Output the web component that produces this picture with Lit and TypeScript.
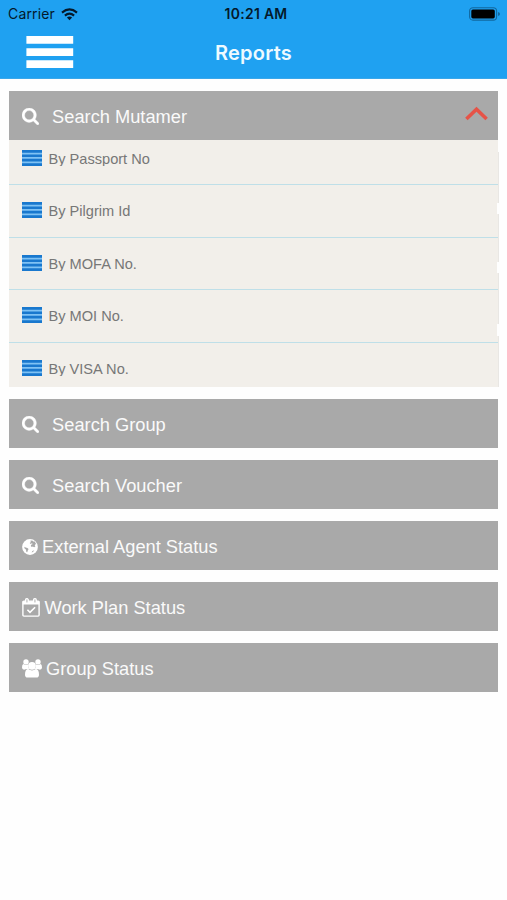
import { LitElement, html, css, svg } from "lit";
import { customElement } from "lit/decorators.js";

const icons: Record<string, unknown> = {
  search: html`<svg class="search" viewBox="64 128 1664 1664" width="17" height="17"><path fill="#fff" stroke="#fff" stroke-width="30" d="M1216 832q0-185-131.5-316.5t-316.5-131.5-316.5 131.5-131.5 316.5 131.5 316.5 316.5 131.5 316.5-131.5 131.5-316.5zm512 832q0 52-38 90t-90 38q-54 0-90-38l-343-342q-179 124-399 124-143 0-273.5-55.5t-225-150-150-225-55.5-273.5 55.5-273.5 150-225 225-150 273.5-55.5 273.5 55.5 225 150 150 225 55.5 273.5q0 220-124 399l343 343q37 37 37 90z"/></svg>`,
  globe: html`<svg class="globe" viewBox="0 0 16 16" width="16" height="16"><circle cx="8" cy="8" r="7.9" fill="#fff"/><path fill="#a9a9a9" d="M8.2 1.7L10.3 1.5L11.2 2.4L12.7 2.6L14 4.8L12.7 6.2L13.4 7.4L12.1 8.3L10.8 7.5L9.8 8L8.8 7L9.2 5.8L10.8 4.9L9.8 4.3L8.6 5L7.7 4.1L9 3.1ZM2.3 7.7L3.7 8.6L5.4 9.1L6.6 10.1L5.9 11.3L5.2 13.2L4.4 12.9L3.9 10.6L2.6 9.5ZM10.4 12L11.8 11.4L12.3 11.8L10.4 13.3L9.6 13.5Z"/></svg>`,
  calendar: html`<svg class="calendar" viewBox="0 0 18 19" width="18" height="19"><rect x=".9" y="3.1" width="16.2" height="15" rx="1" fill="none" stroke="#fff" stroke-width="1.4"/><path fill="#fff" d="M.7 3.2h16.6v3.3H.7z"/><rect x="3.5" y=".7" width="2.8" height="4.4" rx="1.2" fill="#ccc" stroke="#fff" stroke-width="1.2"/><rect x="11.5" y=".7" width="2.8" height="4.4" rx="1.2" fill="#ccc" stroke="#fff" stroke-width="1.2"/><path fill="none" stroke="#fff" stroke-width="1.6" d="M5.4 11.7l2.6 2.7 5.1-5.1"/></svg>`,
  users: html`<svg class="users" viewBox="0 0 20 19" width="20" height="19"><g fill="#fff"><circle cx="4" cy="2.9" r="2.7"/><circle cx="16" cy="2.9" r="2.7"/><path d="M1.2 5.1Q4 6.8 6 5.6Q5.6 8.5 7.2 10H4.6Q3.5 10.1 2.8 10.6Q0 11 0 8.6Q0 5.6 1.2 5.1ZM18.8 5.1Q16 6.8 14 5.6Q14.4 8.5 12.8 10H15.4Q16.5 10.1 17.2 10.6Q20 11 20 8.6Q20 5.6 18.8 5.1Z"/><circle cx="10" cy="6.8" r="3.9"/><path d="M6.3 10Q10 12.8 13.7 10Q17 10 17 15.8Q17 18.6 14.4 18.6H5.6Q3 18.6 3 15.8Q3 10 6.3 10Z"/></g></svg>`,
};

const bars = [
  { icon: "search", label: "Search Group" },
  { icon: "search", label: "Search Voucher" },
  { icon: "globe", label: "External Agent Status" },
  { icon: "calendar", label: "Work Plan Status" },
  { icon: "users", label: "Group Status" },
];
const items = ["By Passport No", "By Pilgrim Id", "By MOFA No.", "By MOI No.", "By VISA No."];

@customElement("app-root")
export class AppRoot extends LitElement {
  static styles = css`
    :host { display: block; height: 900px; background: #fefefe; overflow: hidden; font-family: "Liberation Sans", Arial, sans-serif; }
    * { box-sizing: border-box; }
    svg { display: block; flex: none; }
    header { height: 79px; background: #1fa1f1; border-bottom: 1px solid #3aa7ea; }
    .status { height: 28px; display: grid; grid-template-columns: 1fr auto 1fr; align-items: center; font: 14px/28px Inter, sans-serif; color: #04192b; padding: 0 6px 0 8px; }
    .carrier { display: flex; align-items: center; gap: 6px; letter-spacing: .16px; }
    .clock { font-weight: 600; font-size: 13.9px; letter-spacing: .3px; padding-left: 3px; }
    .battery { justify-self: end; }
    .nav { height: 50px; display: grid; grid-template-columns: 1fr auto 1fr; align-items: center; }
    .menu { margin: -2px 0 0 26px; }
    .title { font: 600 20px/50px Inter, sans-serif; letter-spacing: .2px; color: #eefaff; }
    main { padding: 12px 9px 0; }
    .bar { height: 49px; margin-bottom: 12.1px; background: #a9a9a9; color: #fafafa; display: flex; align-items: center; padding: 2px 10px 0 12.5px; font-size: 18.25px; line-height: 24px; white-space: nowrap; }
    .bar.open { margin-bottom: 0; }
    .search { margin-right: 13px; margin-left: .6px; }
    .globe { margin-right: 4.6px; }
    .calendar { margin-right: 5px; }
    .users { margin-right: 4.5px; }
    .chevron { margin: -6px 0 0 auto; }
    .list { position: relative; height: 247px; margin: 0 -1px 12px 0; background: #f2efea; overflow: hidden; padding-right: 1px; }
    .item { height: 52.5px; border-bottom: 1.6px solid #bfdfe8; display: flex; padding: 17px 0 0 12.5px; }
    .item:first-child { height: 45.2px; padding-top: 9.7px; }
    .item:last-child { border: 0; }
    .item-label { margin: 1px 0 0 7px; height: 15.8px; line-height: 17px; font-size: 14.6px; color: #777; overflow: hidden; white-space: nowrap; }
    .edge { position: absolute; right: 0; top: 0; }
  `;

  render() {
    return html`
      <header>
        <div class="status">
          <div class="carrier"><span>Carrier</span>
            <svg width="17" height="13" viewBox="0 0 17 13"><g fill="none" stroke="#04192b" stroke-width="2.1"><path d="M1 4.6Q8.5-1.8 16 4.6"/><path d="M3.9 7.6Q8.5 3.5 13.1 7.6"/></g><path fill="#04192b" d="M5.9 9.6Q8.5 7.4 11.1 9.6L8.5 12.3Z"/></svg>
          </div>
          <div class="clock">10:21 AM</div>
          <svg class="battery" width="32" height="14" viewBox="0 0 32 14"><rect x=".6" y=".7" width="27" height="12.4" rx="3.4" fill="none" stroke="#12689f" stroke-width="1.1"/><rect x="2.3" y="2.4" width="23.5" height="9" rx="1.6" fill="#000"/><path fill="#12689f" d="M29 5q2 .4 2 2t-2 2z"/></svg>
        </div>
        <div class="nav">
          <svg class="menu" width="48" height="34" viewBox="0 0 48 34"><path fill="#fff" d="M.4 1h46.8v7.8H.4zM.4 13.2h46.8V21H.4zM.4 25.3h46.8v7.8H.4z"/></svg>
          <div class="title">Reports</div>
        </div>
      </header>
      <main>
        <div class="bar open">${icons.search}<span>Search Mutamer</span>
          <svg class="chevron" width="23" height="15" viewBox="0 0 23 15"><path fill="none" stroke="#e65347" stroke-width="3.6" d="M1.4 13L11.5 3.2L21.6 13"/></svg>
        </div>
        <div class="list">
          ${items.map((t) => html`<div class="item">
            <svg width="20" height="16" viewBox="0 0 20 16"><rect y=".2" width="20" height="15.6" fill="#7fc2f4"/><path fill="#1978ce" d="M0 0h20v2.7H0zM0 4.4h20v2.7H0zM0 8.8h20v2.7H0zM0 13.2h20v2.7H0z"/></svg>
            <span class="item-label">${t}</span></div>`)}
          <svg class="edge" width="2" height="247" viewBox="0 0 2 247"><path fill="#e9e7e4" d="M1 0h1v247H1z"/>${[[0, 12], [63, 11], [122, 11], [184, 12]].map(([y, h]) => svg`<rect x=${y ? 0 : 1} y=${y} width="2" height=${h} fill="#fefefe"/>`)}</svg>
        </div>
        ${bars.map((b) => html`<div class="bar">${icons[b.icon]}<span>${b.label}</span></div>`)}
      </main>`;
  }
}
